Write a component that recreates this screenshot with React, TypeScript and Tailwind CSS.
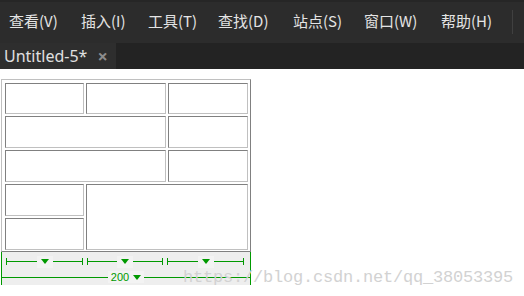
const menus = [
  { label: '查看(V)', w: 'w-[81px] pl-[9px]' },
  { label: '插入(I)', w: 'w-[67px]' },
  { label: '工具(T)', w: 'w-[70px]' },
  { label: '查找(D)', w: 'w-[75px]' },
  { label: '站点(S)', w: 'w-[71px]' },
  { label: '窗口(W)', w: 'w-[77px]' },
  { label: '帮助(H)', w: 'w-[71px]' },
]

const cell = 'border border-t-[#808080] border-l-[#808080] border-r-[#c0c0c0] border-b-[#c0c0c0] bg-white'

function Arrow() {
  return (
    <div className="w-0 h-0 border-l-[4px] border-r-[4px] border-t-[5px] border-l-transparent border-r-transparent border-t-[#009900]" />
  )
}

function ColMarker() {
  return (
    <div className="flex items-center h-[7px]">
      <div className="w-px h-[7px] bg-[#009900]" />
      <div className="flex-1 h-px bg-[#009900]" />
      <div className="px-[4px] h-[12px] flex items-center bg-[#f3f3f3]">
        <Arrow />
      </div>
      <div className="flex-1 h-px bg-[#009900]" />
      <div className="w-px h-[7px] bg-[#009900]" />
    </div>
  )
}

export default function App() {
  return (
    <div className="relative w-full h-[296px] bg-white overflow-hidden font-['Noto_Sans','Noto_Sans_CJK_SC',sans-serif]">
      {/* Menu bar */}
      <div className="h-[43px] bg-[#2c2c2c] border-t-2 border-[#262626] flex items-center pb-[2px]">
        {menus.map(m => (
          <div
            key={m.label}
            className={`${m.w} shrink-0 text-[15px] text-[#e4e4e4] whitespace-nowrap font-['Noto_Sans_CJK_SC',sans-serif]`}
          >
            {m.label}
          </div>
        ))}
        <div className="w-px h-[24px] bg-[#404040]" />
      </div>

      {/* Tab bar */}
      <div className="h-[26px] bg-[#232323] flex">
        <div className="w-[116px] bg-[#2e2e2e] flex items-center pl-[4px]">
          <span className="text-[16px] text-[#e0e0e0] leading-none">Untitled-5*</span>
          <span className="ml-[10px] text-[18px] font-bold text-[#8c8c8c] leading-none">×</span>
        </div>
      </div>

      {/* Design view */}
      <div className="pt-[10px] pl-[1px]">
        <div className="w-[250px] border border-t-[#c0c0c0] border-l-[#c0c0c0] border-r-[#808080] border-b-[#808080] pt-[3px] pl-[3px] pr-[2px] pb-[1px]">
          <div className="grid grid-cols-[79px_80px_80px] grid-rows-[31px_32px_32px_32px_32px] gap-[2px]">
            <div className={cell} />
            <div className={cell} />
            <div className={cell} />
            <div className={`${cell} col-span-2`} />
            <div className={cell} />
            <div className={`${cell} col-span-2`} />
            <div className={cell} />
            <div className={`${cell} col-start-1 row-start-4`} />
            <div className={`${cell} col-start-2 col-span-2 row-start-4 row-span-2`} />
            <div className={`${cell} col-start-1 row-start-5`} />
          </div>
        </div>

        {/* Width guides */}
        <div className="w-[250px] h-[33px] bg-[#eeeeee] border-l border-r border-[#009900] pt-[5px]">
          <div className="grid grid-cols-[77px_76px_77px] gap-x-[4px] pl-[4px] pr-[4px] pt-[1px]">
            <ColMarker />
            <ColMarker />
            <ColMarker />
          </div>
          <div className="flex items-center mt-[6px]">
            <div className="flex-1 h-px bg-[#009900]" />
            <div className="flex items-center gap-[4px] px-[3px] h-[12px] bg-[#f3f3f3]">
              <span className="text-[11px] leading-none text-[#009900] font-['Liberation_Sans',sans-serif]">200</span>
              <Arrow />
            </div>
            <div className="flex-1 h-px bg-[#009900]" />
          </div>
        </div>
      </div>

      {/* Watermark */}
      <div className="absolute left-[183px] top-[269px] text-[17px] leading-[17px] tracking-[-0.2px] text-[#d2d2d2] whitespace-nowrap font-['Liberation_Mono',monospace]">
        https://blog.csdn.net/qq_38053395
      </div>
    </div>
  )
}
